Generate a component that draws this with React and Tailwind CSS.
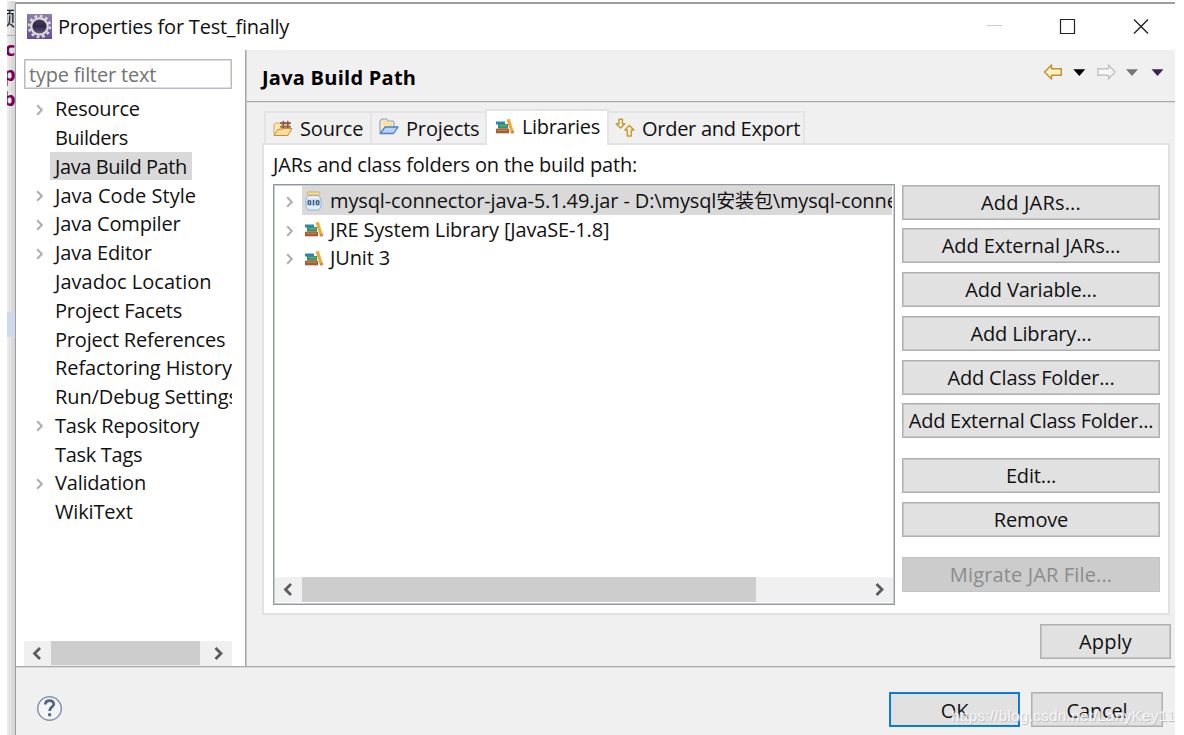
import React from "react";

const treeItems = [
  { label: "Resource", open: true, spacing: "tracking-[-0.200px]" },
  { label: "Builders", spacing: "tracking-[-0.450px]" },
  { label: "Java Build Path", selected: true, spacing: "tracking-[-0.410px]" },
  { label: "Java Code Style", open: true, spacing: "tracking-[0.040px]" },
  { label: "Java Compiler", open: true },
  { label: "Java Editor", open: true },
  { label: "Javadoc Location", spacing: "tracking-[0.020px]" },
  { label: "Project Facets" },
  { label: "Project References", spacing: "tracking-[-0.200px]" },
  { label: "Refactoring History", spacing: "tracking-[-0.080px]" },
  { label: "Run/Debug Settings", spacing: "tracking-[-0.100px]" },
  { label: "Task Repository", open: true, spacing: "tracking-[-0.200px]" },
  { label: "Task Tags", spacing: "tracking-[-0.300px]" },
  { label: "Validation", open: true, spacing: "tracking-[-0.200px]" },
  { label: "WikiText" },
];

function Chevron({ className = "" }) {
  return (
    <svg className={className} width="8" height="12" viewBox="0 0 8 12" fill="none" stroke="#adadad" strokeWidth="2">
      <path d="M1.2 1.2 5.800 6 1.200 10.800" />
    </svg>
  );
}

function ScrollArrow({ right }) {
  return (
    <svg width="26" height="25" viewBox="0 0 26 25" fill="none" stroke="#5c5c5c" strokeWidth="2.8" className="shrink-0">
      <path d={right ? "M10.500 7 16 12.500 10.500 18" : "M16 7 10.500 12.500 16 18"} />
    </svg>
  );
}

function EclipseIcon() {
  return (
    <svg width="25" height="25" viewBox="0 0 25 25" className="shrink-0">
      <defs>
        <linearGradient id="eclipse-bg" x1="0" y1="0" x2="0" y2="1">
          <stop offset="0" stopColor="#8c80ae" />
          <stop offset="1" stopColor="#664d9c" />
        </linearGradient>
        <linearGradient id="eclipse-core" x1="0" y1="0" x2="0" y2="1">
          <stop offset="0" stopColor="#4a4264" />
          <stop offset="0.5" stopColor="#2d2747" />
          <stop offset="1" stopColor="#6b6189" />
        </linearGradient>
      </defs>
      <rect width="25" height="25" fill="url(#eclipse-bg)" />
      <circle cx="12.500" cy="12.500" r="10.400" fill="none" stroke="#ded9d4" strokeWidth="2.800" strokeDasharray="2.800 2.640" />
      <circle cx="12.500" cy="12.500" r="8.200" fill="url(#eclipse-core)" stroke="#dedad6" strokeWidth="2.200" />
    </svg>
  );
}

function SourceIcon() {
  return (
    <svg width="20" height="17" viewBox="0 0 20 17">
      <path d="M1 14.500V4.500L2.500 3h4L8 4.500h8.500V10" fill="#fbe9b5" stroke="#cda55a" />
      <path d="M8 2h9v8H8z" fill="#d9b58a" />
      <path d="M10.300 .8V10M14.800 .8V10M7 3h11M7 6.800h11" stroke="#825440" strokeWidth="1.300" />
      <path d="M1 15.500 5 9.300h3.500L10 8.500h9l-4 7z" fill="#f8dc97" stroke="#c2903f" strokeLinejoin="round" />
    </svg>
  );
}

function ProjectsIcon() {
  return (
    <svg width="20" height="17" viewBox="0 0 20 17" strokeLinejoin="round">
      <path d="M1 15V3.200L3 1h4.500L9 3h5l1 1.500V9" fill="#fbeec8" stroke="#8aa3c9" strokeWidth="1.200" />
      <path d="M3.500 7V3.500L4.500 2h2l1 2H13v4H6z" fill="#f9dfa2" />
      <path d="M1.200 15.500 6 9h13l-4.500 6.500z" fill="#b5d3fc" stroke="#4f7fc8" strokeWidth="1.300" />
    </svg>
  );
}

function BooksIcon() {
  return (
    <svg width="20" height="17" viewBox="0 0 20 17" className="shrink-0">
      <path d="M1 3.500h9v3H1z" fill="#2b86b4" />
      <path d="M3 6h10v4.700H3z" fill="#379268" />
      <path d="M5 7.700h7" stroke="#72b68e" />
      <path d="M1 10.700h13v4.600H1z" fill="#ae5830" />
      <path d="M2.500 12.300h10" stroke="#d08a60" />
      <path d="m11.500 1.800 3.300-1.100 4 13.100-2.900 1z" fill="#eeaa3c" />
      <path d="m15.500 13.600 3.200-1 .5 2.300-2.700.8z" fill="#d9804a" />
    </svg>
  );
}

function OrderIcon() {
  return (
    <svg width="20" height="20" viewBox="0 0 20 20" fill="#fff6d6" stroke="#c39a3c" strokeWidth="1.500" strokeLinejoin="round">
      <path d="M4 1.200h3.400v4.600h2.400L5.700 10 1.300 5.800H4z" />
      <path d="M14.300 7.500 18.900 12h-2.600v6h-4v-6H9.800z" />
    </svg>
  );
}

function JarIcon() {
  return (
    <svg width="17" height="20" viewBox="0 0 17 20" className="shrink-0">
      <path d="M3.500 4.500h10L16 8v8l-2.500 3h-10L1 16V8z" fill="#e4eef8" stroke="#94b0d0" strokeLinejoin="round" />
      <rect x="2.200" y="1" width="12.600" height="3" rx="1.200" fill="#f6e0a0" stroke="#cfa94c" strokeWidth=".9" />
      <rect x="1.500" y="8.500" width="14" height="6.300" fill="#b9d0e8" />
      <g fill="none" stroke="#38587f" strokeWidth="1.200">
        <rect x="3.200" y="9.800" width="2.400" height="3.700" rx=".8" />
        <path d="M8.500 9v5.200" />
        <rect x="11.400" y="9.800" width="2.400" height="3.700" rx=".8" />
      </g>
    </svg>
  );
}

function NavIcons() {
  return (
    <svg width="122" height="18" viewBox="0 0 122 18" strokeLinejoin="round">
      <path d="M2.500 9 9.500 2v3.800h9.700v6.400H9.500V16z" fill="#fff3c2" stroke="#c48d34" strokeWidth="1.500" />
      <path d="M31.300 6.300h12l-6 6.700z" fill="#000" />
      <path d="M73 9 66.500 2v3.800H55.800v6.400h10.700V16z" fill="#f6f6f6" stroke="#c2c2c2" strokeWidth="1.500" />
      <path d="M84 6.300h12L90 13z" fill="#777" />
      <path d="M109.500 6.300h12l-6 6.700z" fill="#3b2452" />
    </svg>
  );
}

const normalButton = "border-[#b0b0b0] bg-[#e1e1e1] shadow-[inset_0_0_0_1px_#c6c6c6]";
const defaultButton = "border-[#1580d8] bg-[#e1e1e1] shadow-[inset_0_0_0_1px_#0078d7]";
const disabledButton = "border-[#c3c3c3] bg-[#cccccc] text-[#8b8b8b]";

function Button({ children, look = normalButton, className = "" }) {
  return (
    <button className={`flex h-[35px] shrink-0 items-center justify-center whitespace-nowrap border pt-[1px] ${look} ${className}`}>
      {children}
    </button>
  );
}

function Sidebar() {
  return (
    <aside className="relative flex w-[230px] shrink-0 flex-col border-r border-[#a6a6a6] bg-white pl-2 shadow-[1px_0_0_#c8c8c8]">
      <div className="mt-[9px] flex h-[30px] w-[208px] items-center border border-[#b9bac2] pl-[4px] pt-[1px] tracking-[-0.200px] text-[#737373] shadow-[inset_0_0_0_1px_#dcdce2]">
        type filter text
      </div>
      <div className="mt-[5px] flex w-[208px] flex-col overflow-hidden">
        {treeItems.map((item) => (
          <div key={item.label} className="flex h-[28.780px] shrink-0 items-center">
            <div className="flex w-[26px] shrink-0 justify-center pl-[6px] pt-[3px]">{item.open && <Chevron />}</div>
            <span className={`flex h-full items-center whitespace-nowrap pl-[5px] pr-[5px] pt-[2px] ${item.spacing || ""} ${item.selected ? "bg-[#d9d9d9]" : ""}`}>
              {item.label}
            </span>
          </div>
        ))}
      </div>
      <div className="mt-auto flex h-[25px] w-[208px] bg-[#f0f0f0]">
        <ScrollArrow />
        <div className="ml-[1px] h-6 w-[149px] bg-[#cdcdcd]" />
        <div className="ml-[5px]"><ScrollArrow right /></div>
      </div>
    </aside>
  );
}

function Tabs() {
  return (
    <div className="flex h-[34px] items-end pl-[2px]">
      <div className="flex h-[32px] w-[106px] items-center gap-[7px] border-l-2 border-t-2 border-[#e4e4e4] pl-[7px]">
        <SourceIcon /><span className="pt-px">Source</span>
      </div>
      <div className="flex h-[32px] w-[115px] items-center gap-[7px] border-l-2 border-t-2 border-[#e4e4e4] pl-[7px]">
        <div className="mb-[3px]"><ProjectsIcon /></div><span className="pt-px">Projects</span>
      </div>
      <div className="relative z-10 -mb-[2px] flex h-[36px] w-[124px] items-center gap-[7px] border-x-2 border-t-2 border-[#e4e4e4] bg-white pb-[3px] pl-[8px]">
        <BooksIcon /><span className="tracking-[-0.350px]">Libraries</span>
      </div>
      <div className="flex h-[32px] w-[196px] items-center gap-[7px] border-r-2 border-t-2 border-[#e4e4e4] pl-[6px]">
        <OrderIcon /><span className="whitespace-nowrap pt-px tracking-[-0.280px]">Order and Export</span>
      </div>
    </div>
  );
}

function JarList() {
  return (
    <div className="flex h-[421px] w-[622px] shrink-0 flex-col overflow-hidden border border-[#9297a1] bg-white p-px shadow-[inset_0_0_0_1px_#c9ccd1]">
      <div className="flex h-[29px] items-center pl-[11px]">
        <Chevron className="mr-[8px] mt-[3px] shrink-0" />
        <div className="flex h-full w-[590px] items-center overflow-hidden bg-[#d9d9d9] pl-[3px]">
          <JarIcon />
          <span className="ml-2 whitespace-nowrap tracking-[-0.120px]">
            mysql-connector-java-5.1.49.jar - D:\mysql<span className="text-[19px] tracking-[-0.200px]">安装包</span>\mysql-connector
          </span>
        </div>
      </div>
      {["JRE System Library [JavaSE-1.8]", "JUnit 3"].map((name) => (
        <div key={name} className="flex h-[28.500px] items-center pl-[11px] pt-px">
          <Chevron className="mr-[10px] mt-[2px]" /><BooksIcon /><span className="ml-[6px]">{name}</span>
        </div>
      ))}
      <div className="mb-px mt-auto flex h-[25px] bg-[#f0f0f0]">
        <ScrollArrow />
        <div className="ml-[1px] h-[25px] w-[454px] bg-[#cdcdcd]" />
        <div className="ml-auto mr-[1px]"><ScrollArrow right /></div>
      </div>
    </div>
  );
}

export default function App() {
  return (
    <div className="flex h-[735px] w-[1184px] overflow-hidden bg-white pl-[7px] pr-[9px] font-['Open_Sans','Noto_Sans_CJK_SC',sans-serif] text-[20px] leading-none tracking-[-0.160px] text-[#111]">
      <div className="mt-[1px] flex w-[8px] shrink-0 flex-col overflow-hidden bg-linear-to-r from-[#ededed] to-[#d2d2d2] font-bold text-[#7b0052]">
        <div className="h-[35px] w-full border-b border-[#aaa] pt-2 font-normal text-[#222]"><div className="-ml-3 w-5">频</div></div>
        <div className="-ml-[2px] flex h-[25px] items-center pt-px">c</div>
        <div className="-ml-[4px] flex h-[25px] items-center pt-px">p</div>
        <div className="-ml-[4px] flex h-[25px] items-center pt-px">b</div>
        <div className="mt-[201px] h-[25px] shrink-0 bg-[#cedaeb]" />
      </div>
      <div className="relative mt-[2px] flex w-[1160px] shrink-0 flex-col border-l border-t-2 border-[#9c9ea0] bg-white">
        <header className="flex h-[46px] shrink-0 items-center pl-[11px]">
          <div className="mb-[2px]"><EclipseIcon /></div>
          <h1 className="ml-[6px] tracking-[-0.220px]">Properties for Test_finally</h1>
          <svg className="mb-[2px] ml-auto mr-[25px]" width="164" height="18" viewBox="0 0 164 18" fill="none">
            <path d="M1 8.500h15" stroke="#ccc" />
            <path d="M74.500 2.500h14v14h-14z" stroke="#222" strokeWidth="1.200" />
            <path d="m148 2.500 14 14m0-14-14 14" stroke="#222" strokeWidth="1.400" />
          </svg>
        </header>
        <div className="flex h-[616px] shrink-0">
          <Sidebar />
          <main className="flex min-w-0 grow flex-col bg-[#f0f0f0] pl-px">
            <div className="flex h-[52px] shrink-0 items-center justify-between border-b border-[#a9a9a9] pl-[15px] pr-[11px] shadow-[0_1px_0_#dedede]">
              <h2 className="pt-[4px] font-bold tracking-[0.250px] text-black">Java Build Path</h2>
              <div className="mb-[7px]"><NavIcons /></div>
            </div>
            <section className="flex flex-col pl-[15px] pt-[7px]">
              <Tabs />
              <div className="h-[472px] w-[908px] border-2 border-[#e2e2e2] bg-white pl-[9px]">
                <div className="flex h-[39px] items-center pt-[1px] tracking-[-0.180px]">JARs and class folders on the build path:</div>
                <div className="flex gap-[7px]">
                  <JarList />
                  <div className="flex w-[258px] flex-col gap-[8.750px] pt-[0.500px]">
                    <Button className="tracking-[0.180px]">Add JARs...</Button>
                    <Button className="tracking-[-0.050px]">Add External JARs...</Button>
                    <Button>Add Variable...</Button>
                    <Button>Add Library...</Button>
                    <Button>Add Class Folder...</Button>
                    <Button className="tracking-[-0.270px]">Add External Class Folder...</Button>
                    <Button className="mt-[11px]">Edit...</Button>
                    <Button>Remove</Button>
                    <Button look={disabledButton} className="mt-[11px] tracking-[0.140px]">Migrate JAR File...</Button>
                  </div>
                </div>
              </div>
            </section>
            <div className="mt-[9px] flex justify-end pr-[4px]"><Button className="w-[131px] tracking-[0.200px]">Apply</Button></div>
          </main>
        </div>
        <footer className="flex grow items-start border-t border-[#a9a9a9] bg-[#f0f0f0] pl-[20px] pr-[12px] pt-[25px] shadow-[inset_0_1px_0_#dadada]">
          <svg className="mt-[3px]" width="27" height="27" viewBox="0 0 27 27" fill="none">
            <circle cx="13.500" cy="13.500" r="11.800" fill="#f4f4f4" stroke="#8393ae" strokeWidth="1.500" />
            <path d="M9.300 9.500C9.500 4.200 18 4.600 17.800 9.200 17.700 12 13.600 12 13.600 16" stroke="#506486" strokeWidth="2.700" />
            <circle cx="13.600" cy="19.700" r="1.700" fill="#506486" />
          </svg>
          <Button look={defaultButton} className="ml-auto mr-[11px] w-[131px] pt-[2px]">OK</Button>
          <Button className="w-[132px] pt-[2px]">Cancel</Button>
        </footer>
        <div className="absolute bottom-[9px] left-[935px] flex h-[20px] w-[224px] items-center overflow-hidden whitespace-nowrap font-['Liberation_Sans',sans-serif] text-[15.500px] tracking-[0.150px] text-white/80 [text-shadow:1px_1px_1px_#bbb]">https://blog.csdn.net/LanyKey11</div>
      </div>
    </div>
  );
}
